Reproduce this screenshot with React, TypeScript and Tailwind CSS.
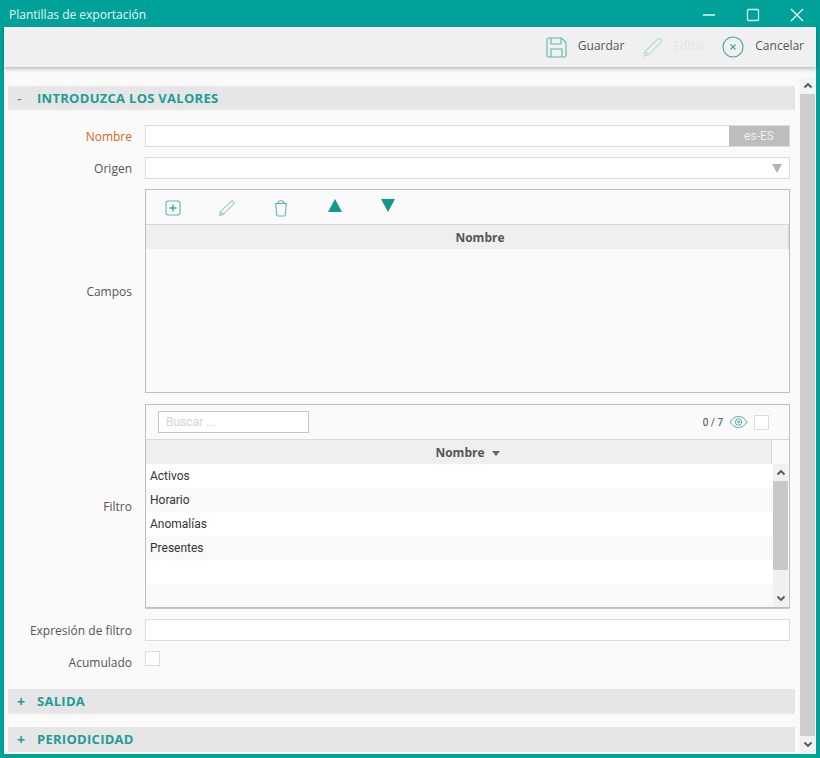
import { ReactNode } from 'react';

const rows = ['Activos', 'Horario', 'Anomalías', 'Presentes', '', ''];

function Label({ children, className = '' }: { children: ReactNode; className?: string }) {
  return (
    <div className={`h-[22px] w-[124px] shrink-0 pt-[1px] text-right text-[12px] leading-[22px] text-[#555] ${className}`}>
      {children}
    </div>
  );
}

function SectionHeader({ sign, title, className = '' }: { sign: string; title: string; className?: string }) {
  return (
    <div className={`flex w-[787px] items-center bg-[#e6e6e6] ${className}`}>
      <span className={`w-[29px] pl-[9px] text-[14px] text-[#1a9e97] ${sign === '+' ? 'font-bold' : 'font-normal'}`}>{sign}</span>
      <span className="text-[13px] font-bold tracking-[0.28px] text-[#1f9c95]">{title}</span>
    </div>
  );
}

function ScrollArrow({ up }: { up?: boolean }) {
  return (
    <svg width="10" height="7" viewBox="0 0 10 7" fill="none" stroke="#555" strokeWidth="1.8">
      <path d={up ? 'M1.5 5.5 5 2l3.5 3.5' : 'M1.5 1.5 5 5l3.5-3.5'} />
    </svg>
  );
}

function Teal({ children, w, h, box, opacity = 1 }: { children: ReactNode; w: number; h: number; box: string; opacity?: number }) {
  return (
    <svg width={w} height={h} viewBox={box} fill="none" stroke="#5fb5b0" strokeWidth="1.1" opacity={opacity}>
      {children}
    </svg>
  );
}

const pencil = (
  <>
    <path d="M3 15.5 2 20l4.500-1.200L19 6.200a2 2 0 0 0 0-2.800l-.4-.4a2 2 0 0 0-2.800 0L3 15.500Z" />
    <path d="M3.200 15.500 6.300 18.600" />
  </>
);

export default function App() {
  return (
    <div className="flex h-[758px] w-[820px] flex-col overflow-hidden bg-[#00a199] px-[4px] pb-[4px] font-['Open_Sans',sans-serif]">
      {/* Title bar */}
      <div className="relative flex h-[27px] shrink-0 items-center justify-between pt-[2px]">
        <span className="pl-[5px] text-[12px] text-[#e8f6f5]">Plantillas de exportación</span>
        <div className="flex items-center gap-[30px] pr-[12px]">
          <svg width="14" height="14" viewBox="0 0 14 14" stroke="#d5f0ee" strokeWidth="1.600" fill="none">
            <path d="M1 7h12" />
          </svg>
          <svg width="14" height="14" viewBox="0 0 14 14" stroke="#d5f0ee" strokeWidth="1.300" fill="none">
            <rect x="1.500" y="1.500" width="11" height="11" rx="1" />
          </svg>
          <svg width="14" height="14" viewBox="0 0 14 14" stroke="#e8f6f5" strokeWidth="1.400" fill="none">
            <path d="M1 1l12 12M13 1 1 13" />
          </svg>
        </div>
      </div>

      {/* Toolbar */}
      <div className="relative z-10 flex h-[40px] shrink-0 items-center justify-end bg-[#f0f0f0] pr-[12px] shadow-[0_2px_4px_rgba(0,0,0,0.25)]">
        <Teal w={21} h={21} box="0 0 21 21">
          <path d="M2.500 1h13l4.500 4.500v13a1.500 1.500 0 0 1-1.500 1.500h-16A1.500 1.500 0 0 1 1 18.500v-16A1.500 1.500 0 0 1 2.500 1Z" />
          <path d="M5 1v6h10V1M5 20v-8h11v8" />
        </Teal>
        <span className="ml-[11px] pb-[2px] text-[12px] text-[#555]">Guardar</span>
        <span className="ml-[18px] flex">
          <Teal w={22} h={22} box="0 0 22 22" opacity={0.4}>
            {pencil}
          </Teal>
        </span>
        <span className="ml-[9px] pb-[2px] text-[12px] text-[#e4e4e4]">Editar</span>
        <span className="ml-[16px] flex">
          <svg width="22" height="22" viewBox="0 0 22 22" fill="none" stroke="#3aa6a0" strokeWidth="1.100">
            <circle cx="11" cy="11" r="10" />
            <path d="M8.500 8.500l5 5M13.500 8.500l-5 5" />
          </svg>
        </span>
        <span className="ml-[11px] pb-[2px] text-[12px] text-[#555]">Cancelar</span>
      </div>

      {/* Body */}
      <div className="flex min-h-0 flex-1 bg-[#fafafa] pl-[4px]">
        <div className="w-[792px] shrink-0 pt-[19px]">
          <SectionHeader sign="-" title="INTRODUZCA LOS VALORES" className="h-[24px] pt-[1px]" />

          <div className="mt-[15px] flex w-[782px] gap-[13px]">
            <Label className="!text-[#d2691e]">Nombre</Label>
            <div className="flex h-[22px] w-[645px] border border-[#dcdcdc] bg-white">
              <div className="flex-1" />
              <div className="flex w-[60px] items-center justify-center bg-[#bdbdbd] font-['Roboto',sans-serif] text-[12px] text-[#eee]">
                es-ES
              </div>
            </div>
          </div>

          <div className="mt-[10px] flex w-[782px] gap-[13px]">
            <Label>Origen</Label>
            <div className="flex h-[22px] w-[645px] items-center justify-end border border-[#dcdcdc] bg-white pr-[7px]">
              <div className="h-0 w-0 border-x-[5px] border-t-[9px] border-x-transparent border-t-[#b4b4b4]" />
            </div>
          </div>

          {/* Campos */}
          <div className="mt-[10px] flex w-[782px] items-center gap-[13px]">
            <Label>Campos</Label>
            <div className="h-[204px] w-[645px] border border-[#bdbdbd]">
              <div className="flex h-[35px] items-center border-b border-[#d8d8d8] pl-[18px]">
                <span className="mt-[2px] flex">
                  <Teal w={18} h={18} box="0 0 18 18">
                    <rect x="2" y="2" width="14" height="14" rx="2.500" />
                    <path d="M5.500 9h7M9 5.500v7" stroke="#3aa6a0" strokeWidth="1.300" />
                  </Teal>
                </span>
                <span className="ml-[36px] mt-[2px] flex">
                  <Teal w={18} h={18} box="0 0 22 22">
                    {pencil}
                  </Teal>
                </span>
                <span className="ml-[36px] mt-[2px] flex">
                  <Teal w={18} h={18} box="0 0 18 18">
                    <path d="M3.800 5 4.600 15.800A1.300 1.300 0 0 0 5.900 17h6.200a1.300 1.300 0 0 0 1.300-1.200L14.200 5" />
                    <path d="M3 4.500h12" />
                    <path d="M6 4.300C6 2.600 7.300 1.800 9 1.800s3 .8 3 2.500" />
                  </Teal>
                </span>
                <div className="relative -top-[2px] ml-[38px] h-0 w-0 border-x-[7px] border-b-[13px] border-x-transparent border-b-[#11998f]" />
                <div className="relative -top-[2px] ml-[39px] h-0 w-0 border-x-[7px] border-t-[13px] border-x-transparent border-t-[#11998f]" />
              </div>
              <div className="flex h-[24px] items-center justify-center border-r border-[#d8d8d8] bg-[#efefef] pl-[26px] pt-[1px] text-[12px] font-bold text-[#555]">
                Nombre
              </div>
            </div>
          </div>

          {/* Filtro */}
          <div className="mt-[11px] flex w-[782px] items-center gap-[13px]">
            <Label>Filtro</Label>
            <div className="h-[204px] w-[645px] border border-[#bdbdbd] shadow-[0_1px_0_#c8c8c8]">
              <div className="flex h-[35px] items-center justify-between border-b border-[#d8d8d8] pl-[12px] pr-[20px]">
                <input
                  placeholder="Buscar ..."
                  className="h-[22px] w-[151px] border border-[#c4c4c4] bg-white px-[7px] font-['Roboto',sans-serif] text-[12px] outline-none placeholder:text-[#d4d4d4]"
                />
                <div className="flex items-center">
                  <span className="font-['Roboto',sans-serif] text-[10px] text-[#444]">0 / 7</span>
                  <span className="ml-[6px] flex">
                    <svg width="19" height="14" viewBox="0 0 19 14" fill="none" stroke="#52b0aa" strokeWidth="1">
                      <path d="M1 7c2.200-3.600 5-5.500 8.500-5.500S15.800 3.400 18 7c-2.200 3.600-5 5.500-8.500 5.500S3.200 10.600 1 7Z" />
                      <circle cx="9.500" cy="7" r="3.200" />
                      <circle cx="9.500" cy="7" r="1.100" />
                    </svg>
                  </span>
                  <div className="ml-[6px] h-[15px] w-[15px] border border-[#dcdcdc] bg-white" />
                </div>
              </div>
              <div className="flex h-[24px]">
                <div className="flex w-[626px] items-center justify-center gap-[7px] border-r border-[#d8d8d8] bg-[#efefef] pl-[18px] pt-[1px] text-[12px] font-bold text-[#555]">
                  Nombre
                  <span className="mt-[2px] h-0 w-0 border-x-[4px] border-t-[5px] border-x-transparent border-t-[#666]" />
                </div>
              </div>
              <div className="flex h-[143px] overflow-hidden">
                <div className="w-[627px]">
                  {rows.map((name, i) => (
                    <div
                      key={i}
                      className={`h-[24px] pl-[4px] font-['Roboto',sans-serif] text-[12px] leading-[24px] text-[#333] ${i % 2 ? 'bg-[#f9f9f9]' : 'bg-white'}`}
                    >
                      {name}
                    </div>
                  ))}
                </div>
                <div className="flex w-[15px] flex-col bg-[#f0f0f0]">
                  <div className="flex h-[17px] items-center justify-center">
                    <ScrollArrow up />
                  </div>
                  <div className="h-[89px] bg-[#c8c8c8]" />
                  <div className="flex flex-1 items-end justify-center pb-[5px]">
                    <ScrollArrow />
                  </div>
                </div>
              </div>
            </div>
          </div>

          <div className="mt-[11px] flex w-[782px] gap-[13px]">
            <Label>Expresión de filtro</Label>
            <div className="h-[22px] w-[645px] border border-[#dcdcdc] bg-white" />
          </div>

          <div className="mt-[10px] flex w-[782px] gap-[13px]">
            <Label>Acumulado</Label>
            <div className="h-[15px] w-[15px] border border-[#dcdcdc] bg-white" />
          </div>

          <SectionHeader sign="+" title="SALIDA" className="mt-[16px] h-[25px]" />
          <SectionHeader sign="+" title="PERIODICIDAD" className="mt-[13px] h-[25px]" />
        </div>

        {/* Page scrollbar */}
        <div className="w-[16px] shrink-0 pr-[1px] pt-[10px] pb-[1px]">
          <div className="flex h-full flex-col">
            <div className="flex h-[17px] items-center justify-center bg-[#f4f4f4]">
              <ScrollArrow up />
            </div>
            <div className="flex-1 bg-[#cdcdcd]" />
            <div className="flex h-[17px] items-center justify-center bg-[#f0f0f0]">
              <ScrollArrow />
            </div>
          </div>
        </div>
      </div>
    </div>
  );
}
